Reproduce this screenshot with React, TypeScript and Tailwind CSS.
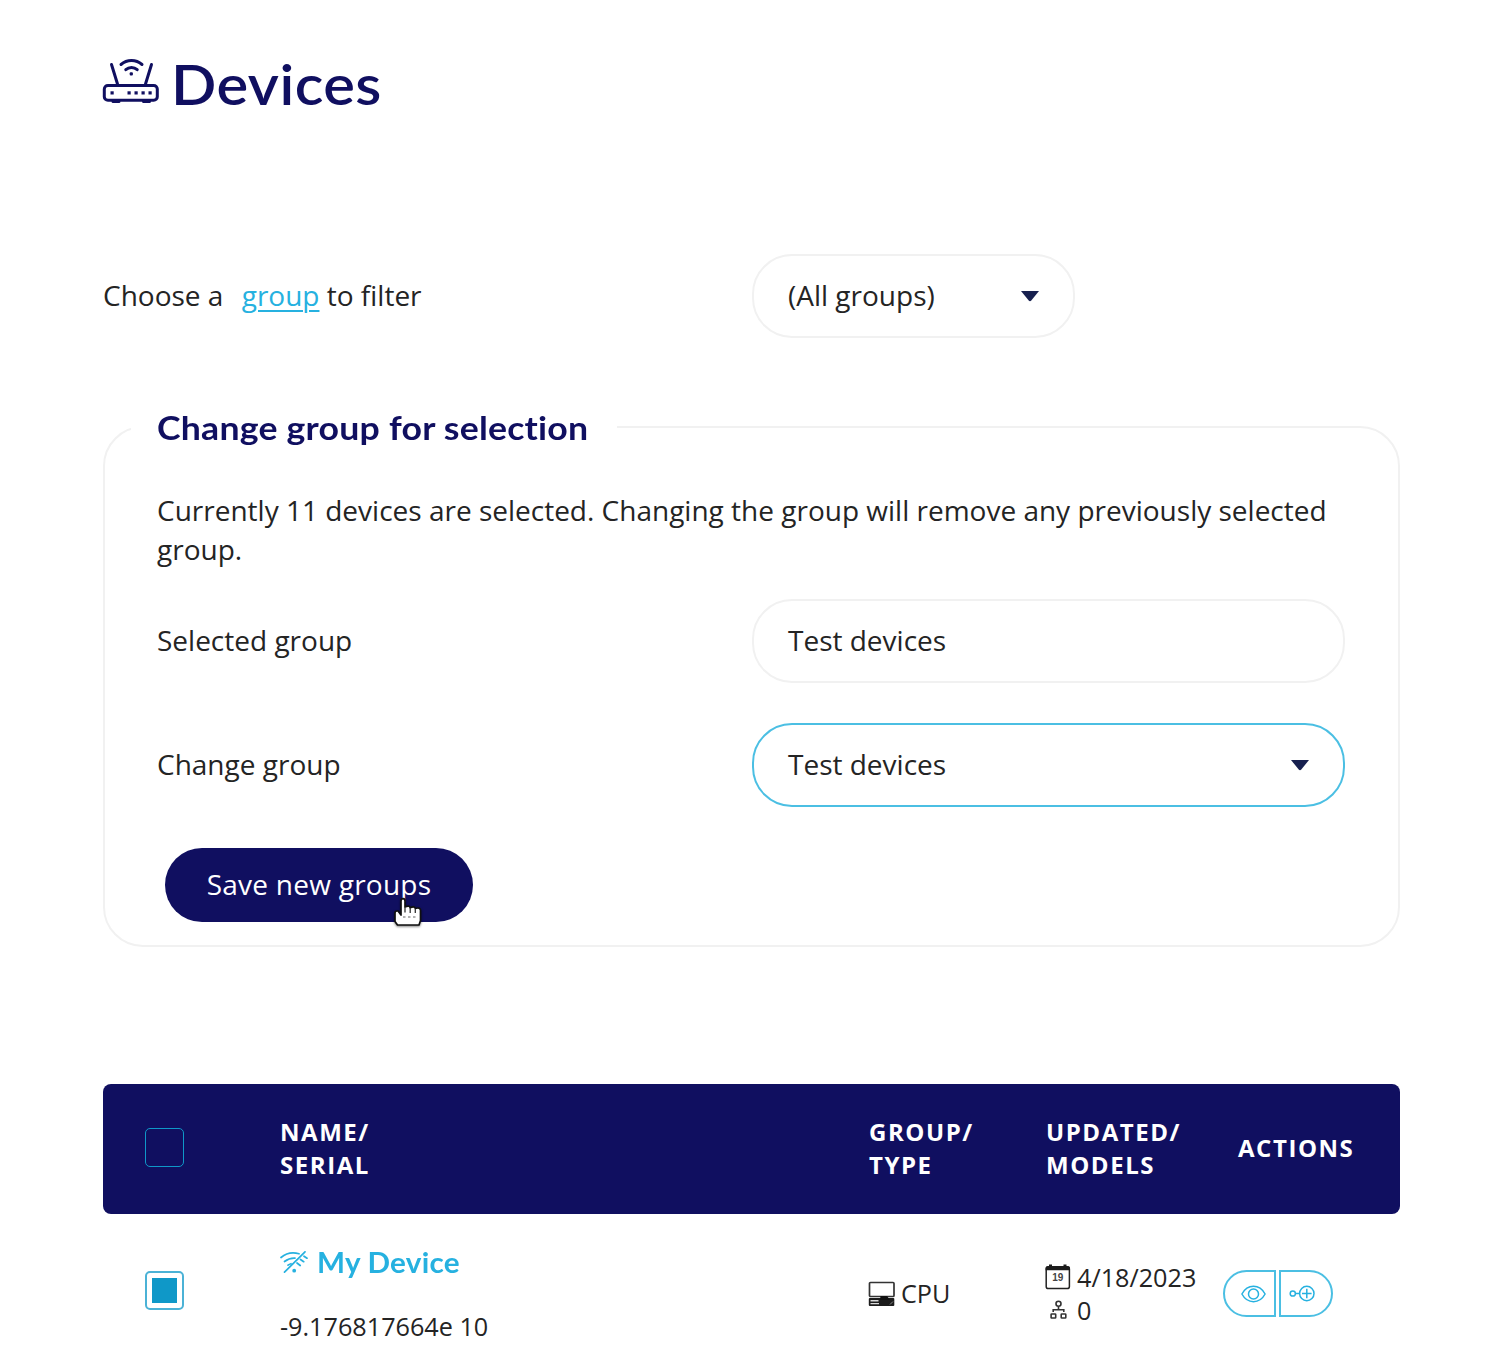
function RouterIcon() {
  return (
    <svg width="58" height="48" viewBox="0 0 58 48" fill="none" stroke="#100f60" strokeWidth="3" strokeLinecap="round" className="ml-[-1px] shrink-0">
      <rect x="2.300" y="28.500" width="53" height="14.800" rx="3.600" />
      <path d="M9.500 7.500 15.500 27M49.500 7.500 43.500 27" />
      <path d="M19 7.500C25 2.300 34 2.300 40 7.500M23.800 12.700C27 9.800 32 9.800 35.200 12.700" />
      <path d="M11 44.500H17M41.500 44.500H47.500" />
      <g fill="#100f60" stroke="none">
        <rect x="27.700" y="15.200" width="3.200" height="3.200" rx="1" />
        <rect x="8.500" y="34.300" width="3.200" height="3.200" />
        <rect x="25.500" y="34.300" width="3.200" height="3.200" />
        <rect x="32.500" y="34.300" width="3.200" height="3.200" />
        <rect x="39.500" y="34.300" width="3.200" height="3.200" />
        <rect x="46.500" y="34.300" width="3.200" height="3.200" />
      </g>
    </svg>
  );
}

function Caret() {
  return (
    <svg width="18" height="11" viewBox="0 0 18 11" className="shrink-0">
      <path d="M0 0H18L10.300 9.600Q9 11 7.700 9.600Z" fill="#17204f" />
    </svg>
  );
}

function WifiOffIcon() {
  return (
    <svg width="28" height="23" viewBox="0 0 28 23" fill="none" stroke="#26b1e0" strokeWidth="1.700" strokeLinecap="round" className="shrink-0">
      <path d="M1 6.500C6 2.300 13 1 19 2.800" />
      <path d="M4.500 10.500C8 7.800 11 6.900 15 7.100" />
      <path d="M8 14.200C9 13.400 9.800 13 11 12.700" />
      <path d="M25 .8 4.500 21.200" />
      <path d="M24 5.200 27 7.200M20.500 8.500 23.700 10.700M17 12 20.200 14.500" />
      <circle cx="14.200" cy="19.700" r="1.900" fill="#26b1e0" stroke="none" />
    </svg>
  );
}

function ComputerIcon() {
  return (
    <svg width="28" height="26" viewBox="0 0 28 26" className="ml-[-1px] shrink-0">
      <rect x="1.500" y="1.500" width="24.500" height="14" rx="1" fill="#fff" stroke="#333" strokeWidth="1.700" />
      <rect x=".8" y="17" width="25.500" height="8" rx="1" fill="#1c1c1c" />
      <path d="M2.500 19.700H10.500M2.500 22.600H11" stroke="#d8d8d8" strokeWidth="1.400" />
      <path d="M12.500 15H19L22 19H12Z" fill="#111" />
      <path d="M22 23.500 25 20.500" stroke="#888" strokeWidth="1" />
    </svg>
  );
}

function CalendarIcon() {
  return (
    <svg width="26" height="26" viewBox="0 0 26 26" className="ml-[-1px] mt-[-2px] shrink-0">
      <rect x="1.200" y="2.800" width="23.200" height="21.800" rx="2.200" fill="#fff" stroke="#222" strokeWidth="1.500" />
      <path d="M.6 6.300V4Q.6 2.200 2.400 2.200H4V.6H7V2.200H18.500V.6H21.500V2.200H23.200Q25 2.200 25 4V6.300Z" fill="#1c1c1c" />
      <text x="12.800" y="17.300" textAnchor="middle" fontSize="10" fontWeight="bold" fill="#444" fontFamily="Liberation Sans, sans-serif">19</text>
    </svg>
  );
}

function ModelsIcon() {
  return (
    <svg width="17" height="20" viewBox="0 0 17 20" fill="none" stroke="#333" strokeWidth="1.600" className="mt-[-2px] shrink-0">
      <circle cx="8.500" cy="3.700" r="2.500" />
      <path d="M8.500 6.400V9.800M3.200 12V9.800H13.800V12" />
      <rect x="1.100" y="14" width="4.600" height="4" rx=".6" />
      <rect x="11.200" y="14" width="4.600" height="4" rx=".6" />
    </svg>
  );
}

function EyeIcon() {
  return (
    <svg width="25" height="18" viewBox="0 0 25 18" fill="none" stroke="#26b1e0" strokeWidth="1.500">
      <path d="M.9 9C6.500-1.300 18.500-1.300 24.100 9 18.500 19.300 6.500 19.300.9 9Z" />
      <circle cx="12.500" cy="9" r="5" />
    </svg>
  );
}

function AddNodeIcon() {
  return (
    <svg width="26" height="17" viewBox="0 0 26 17" fill="none" stroke="#26b1e0" strokeWidth="1.500">
      <circle cx="3.800" cy="8.500" r="2.600" />
      <path d="M6.400 8.500H10.500M13 8.500H22.600M17.800 3.700V13.300" />
      <circle cx="17.800" cy="8.500" r="7.200" />
    </svg>
  );
}

function HandCursor() {
  return (
    <svg width="32" height="34" viewBox="0 0 32 34" className="absolute left-[227px] top-[49px] drop-shadow-[0_1px_1px_rgba(0,0,0,0.5)]">
      <path d="M9 4Q9 1.600 11 1.600T13 4V10Q17.500 8 18.200 10.700 22.500 8.800 23.300 11.500 28 10 28.500 13V23.500L27 28H5.500L3 24.500V16Q3 14 5 14H6L9 18Z" fill="#fff" stroke="#111" strokeWidth="1.700" strokeLinejoin="round" />
      <path d="M13 10V15.500M18.200 11V16M23.300 12V16" stroke="#333" strokeWidth="1.300" />
      <path d="M11 20H13.500M16 20H18.500M21 20H23.500" stroke="#999" strokeWidth="1.500" />
    </svg>
  );
}

const headCell = "mt-[-2px] text-[24px] leading-[33px] font-bold tracking-[1.550px] text-white";

export default function App() {
  return (
    <main className="h-[1361px] w-[1496px] overflow-hidden bg-white pl-[103px] pr-[96px] font-['Open_Sans',sans-serif] text-[28px] leading-[39px] text-[#242424]">
      <h1 className="flex h-[254px] items-start pt-[57px] text-[#100f60]">
        <RouterIcon />
        <span className="ml-[11px] mt-[-5px] origin-left scale-x-[1.085] font-['Lato',sans-serif] text-[55px] leading-[65px] font-semibold tracking-[0.400px]">Devices</span>
      </h1>

      <div className="flex h-[84px] items-center">
        <p className="mt-[-2px] w-[649px] whitespace-pre">Choose a <a className="ml-[11px] text-[#26b1e0] underline decoration-2 underline-offset-4">group</a> to filter</p>
        <div className="flex h-[84px] w-[323px] items-center justify-between rounded-[40px] border-2 border-[#f1f1f1] pl-[34px] pr-[34px]">
          <span className="mt-[-2px]">(All groups)</span>
          <Caret />
        </div>
      </div>

      <fieldset className="mt-[68px] h-[541px] w-[1297px] rounded-[40px] border-2 border-[#f1f1f1] pl-[52px] pr-[52px]">
        <legend className="ml-[-26px] h-[42px] w-[486px] px-[26px] font-['Lato',sans-serif] text-[33px] leading-[43px] font-bold tracking-[0.200px] text-[#100f60]">
          <span className="inline-block origin-left scale-x-[1.080] whitespace-nowrap">Change group for selection</span>
        </legend>
        <p className="mt-[43px]">Currently 11 devices are selected. Changing the group will remove any previously selected group.</p>
        <div className="mt-[30px] flex h-[84px] items-center">
          <label className="mt-[-2px] w-[595px]">Selected group</label>
          <div className="flex h-[84px] w-[593px] items-center rounded-[40px] border-2 border-[#f1f1f1] pl-[34px]"><span className="mt-[-2px]">Test devices</span></div>
        </div>
        <div className="mt-[40px] flex h-[84px] items-center">
          <label className="mt-[-1px] w-[595px]">Change group</label>
          <div className="flex h-[84px] w-[593px] items-center justify-between rounded-[40px] border-2 border-[#4bbfe3] pl-[34px] pr-[34px]">
            <span className="mt-[-1px]">Test devices</span>
            <Caret />
          </div>
        </div>
        <button className="relative ml-[8px] mt-[41px] block h-[74px] w-[308px] rounded-full bg-[#100f60] pb-px text-white">
          <span className="tracking-[0.250px]">Save new groups</span>
          <HandCursor />
        </button>
      </fieldset>

      <div className="mt-[137px] grid h-[130px] w-[1297px] grid-cols-[177px_589px_177px_192px_162px] items-center rounded-[8px] bg-[#100f60]">
        <div className="ml-[42px] mt-[-4px] size-[39px] rounded-[5px] border-[1.500px] border-[#0f98c8]" />
        <div className={headCell}>NAME/<br />SERIAL</div>
        <div className={headCell}>GROUP/<br />TYPE</div>
        <div className={headCell}>UPDATED/<br />MODELS</div>
        <div className={headCell + " pb-[2px]"}>ACTIONS</div>
      </div>

      <div className="grid h-[147px] grid-cols-[177px_589px_177px_177px_177px] items-start text-[25.200px]">
        <div className="ml-[42px] mt-[57px] flex size-[39px] items-center justify-center rounded-[5px] border-2 border-[#4bb2d6]">
          <div className="size-[25px] bg-[#0f98c8]" />
        </div>
        <div>
          <div className="mt-[28px] flex h-[40px] items-center">
            <WifiOffIcon />
            <span className="ml-[9px] origin-left scale-x-[1.060] font-['Lato',sans-serif] text-[28px] font-bold tracking-[0.200px] text-[#26b1e0]">My Device</span>
          </div>
          <div className="mt-[25px]">-9.176817664e 10</div>
        </div>
        <div className="mt-[60px] flex items-center"><ComputerIcon /><span className="ml-[5px]">CPU</span></div>
        <div className="mt-[47px]">
          <div className="flex h-[33px] items-center"><CalendarIcon /><span className="ml-[6px]">4/18/2023</span></div>
          <div className="flex h-[33px] items-center pl-[4px]"><ModelsIcon /><span className="ml-[10px]">0</span></div>
        </div>
        <div className="mt-[56px] flex gap-[3px]">
          <button className="flex h-[47px] w-[53px] items-center justify-center rounded-l-[24px] border-2 border-[#4bbfe3] pl-[8px]"><EyeIcon /></button>
          <button className="flex h-[47px] w-[54px] items-center justify-center rounded-r-[24px] border-2 border-[#4bbfe3] pr-[9px]"><AddNodeIcon /></button>
        </div>
      </div>
    </main>
  );
}
